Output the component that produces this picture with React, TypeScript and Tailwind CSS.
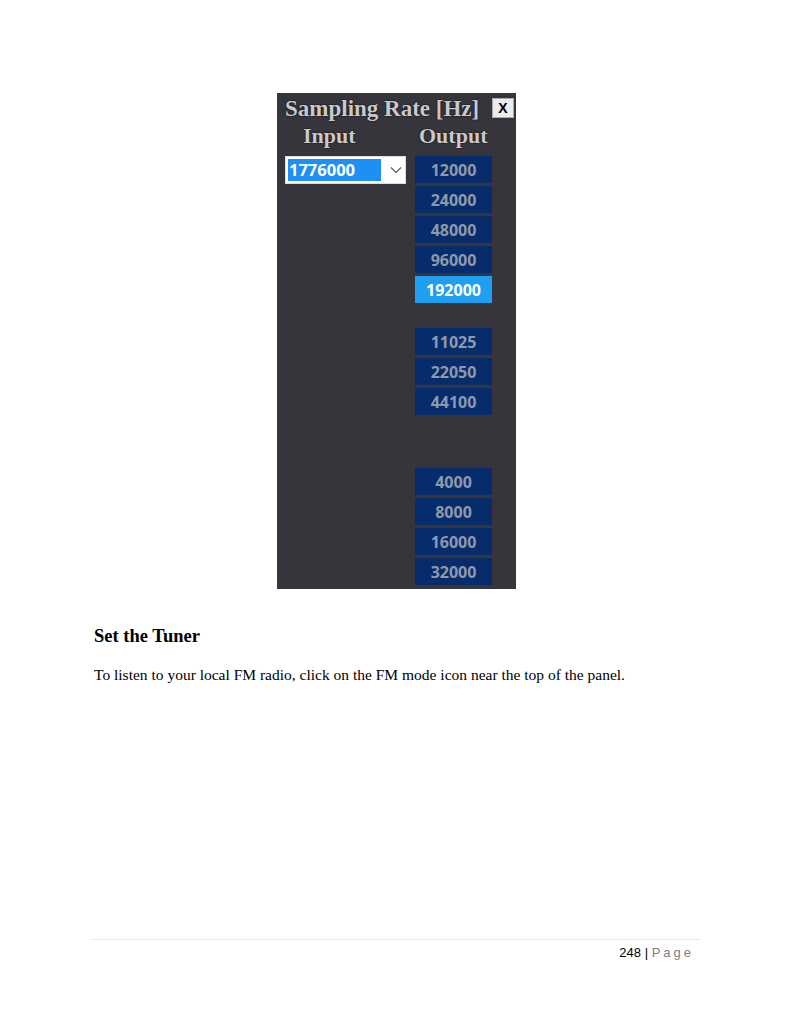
const group1 = ["12000", "24000", "48000", "96000", "192000"];
const group2 = ["11025", "22050", "44100"];
const group3 = ["4000", "8000", "16000", "32000"];

const serif = { fontFamily: '"Liberation Serif", serif', textShadow: "0 0 2px #000" };

function RateButton({ value, active }: { value: string; active?: boolean }) {
  return (
    <div
      className={
        active
          ? "flex h-[27px] w-[77px] items-center justify-center bg-[#1f9ff0] text-[16px] font-bold text-white"
          : "flex h-[27px] w-[77px] items-center justify-center bg-[#072c6c] text-[16px] font-bold text-[#8e99ad]"
      }
    >
      {value}
    </div>
  );
}

function SamplingPanel() {
  return (
    <div className="ml-[277px] flex h-[496px] w-[239px] flex-col bg-[#37353c] pl-2 pt-[3px]">
      {/* title bar */}
      <div className="flex items-start">
        <span className="whitespace-nowrap text-[23px] font-bold leading-[26px] text-[#c9c8cc]" style={serif}>
          Sampling Rate [Hz]
        </span>
        <div
          className="ml-auto mr-[2px] mt-[2px] flex h-[20px] w-[22px] items-center justify-center border border-[#aaa] bg-[#ececec] text-[14px] font-bold text-black"
          style={{ fontFamily: '"Liberation Sans", sans-serif' }}
        >
          X
        </div>
      </div>

      <div className="mt-[1px] flex text-[22px] font-bold leading-[26px] text-[#c9c8cc]" style={serif}>
        <span className="ml-[18px] w-[112px]">Input</span>
        <span className="ml-[4px]">Output</span>
      </div>

      <div className="mt-[7px] flex gap-[9px]" style={{ fontFamily: '"Open Sans", sans-serif' }}>
        <div className="w-[121px]">
          <div className="flex h-[28px] items-center border border-[#ddd] bg-white p-[2px]">
            <div className="flex h-full w-[93px] items-center bg-[#1e90f5] pl-[1px] text-[16.5px] font-bold text-white">
              1776000
            </div>
            <svg className="ml-[9px]" width="12" height="8" viewBox="0 0 12 8">
              <path d="M1 1.5 L6 6.5 L11 1.5" fill="none" stroke="#666" strokeWidth="1.3" />
            </svg>
          </div>
        </div>
        <div className="flex flex-col">
          <div className="flex flex-col gap-[3px]">
            {group1.map((v) => (
              <RateButton key={v} value={v} active={v === "192000"} />
            ))}
          </div>
          <div className="mt-[25px] flex flex-col gap-[3px]">
            {group2.map((v) => (
              <RateButton key={v} value={v} />
            ))}
          </div>
          <div className="mt-[53px] flex flex-col gap-[3px]">
            {group3.map((v) => (
              <RateButton key={v} value={v} />
            ))}
          </div>
        </div>
      </div>
    </div>
  );
}

export default function App() {
  return (
    <div className="relative min-h-[1024px] w-[791px] bg-white pt-[93px]">
      <SamplingPanel />

      <div className="px-[94px]" style={{ fontFamily: '"Liberation Serif", serif' }}>
        <h2 className="mt-[35px] text-[18.5px] font-bold leading-[24px] text-black">Set the Tuner</h2>
        <p className="mt-[17px] text-[15.5px] leading-[20px] text-black">
          To listen to your local FM radio, click on the FM mode icon near the top of the panel.
        </p>
      </div>

      <div
        className="mx-[91px] mt-[254px] border-t border-[#e6e6e6] pr-[6px] pt-[5px] text-right text-[13px] leading-[16px]"
        style={{ fontFamily: '"Liberation Sans", sans-serif' }}
      >
        <span className="text-black">248 | </span>
        <span className="tracking-[3px] text-[#808080]">Page</span>
      </div>
    </div>
  );
}
